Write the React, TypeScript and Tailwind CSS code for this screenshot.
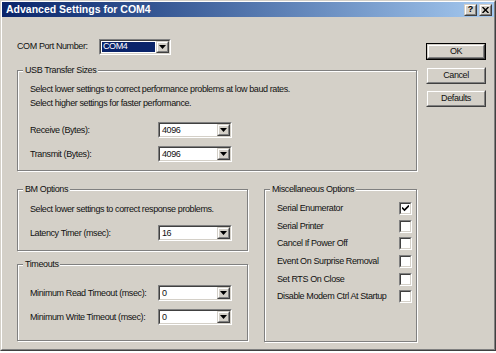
import React from "react";

const sunkenOuter = "border border-t-[#808080] border-l-[#808080] border-r-white border-b-white";
const sunkenInner = "border border-t-[#404040] border-l-[#404040] border-r-[#d4d0c8] border-b-[#d4d0c8]";
const raisedOuter = "border border-t-[#d4d0c8] border-l-[#d4d0c8] border-r-[#404040] border-b-[#404040]";
const raisedInner = "border border-t-white border-l-white border-r-[#808080] border-b-[#808080]";

function Arrow() {
  return (
    <svg width="7" height="4" viewBox="0 0 7 4">
      <path d="M0 0H7L3.5 4Z" fill="#000" />
    </svg>
  );
}

function Combo({ value, selected = false, className = "" }: { value: string; selected?: boolean; className?: string }) {
  return (
    <div className={`flex h-[16px] ${sunkenOuter} ${className}`}>
      <div className={`flex flex-1 bg-white ${sunkenInner}`}>
        <div className="flex flex-1 items-center">
          {selected ? (
            <div className="ml-[1px] mr-[1px] flex h-[10px] flex-1 items-center bg-[#0a246a] pl-[1px] text-white">{value}</div>
          ) : (
            <div className="pl-[2px]">{value}</div>
          )}
        </div>
        <div className={`flex w-[13px] items-center justify-center bg-[#d4d0c8] ${raisedOuter}`}>
          <div className={`flex h-full w-full items-center justify-center ${raisedInner}`}>
            <Arrow />
          </div>
        </div>
      </div>
    </div>
  );
}

function Check({ checked = false }: { checked?: boolean }) {
  return (
    <div className={`h-[13px] w-[13px] ${sunkenOuter}`}>
      <div className={`flex h-full w-full items-center justify-center bg-white ${sunkenInner}`}>
        {checked && (
          <svg width="7" height="7" viewBox="0 0 7 7">
            <path d="M0 2.5L2.5 5L7 0.5" fill="none" stroke="#000" strokeWidth="1.6" />
          </svg>
        )}
      </div>
    </div>
  );
}

function Group({ title, className = "", children }: { title: string; className?: string; children?: React.ReactNode }) {
  return (
    <div className={`relative border border-[#808080] shadow-[1px_1px_0_#fff,inset_1px_1px_0_#fff] ${className}`}>
      <span className="absolute left-[5px] top-[-7px] bg-[#d4d0c8] px-[2px] leading-[12px]">{title}</span>
      {children}
    </div>
  );
}

function Button({ label, isDefault = false }: { label: string; isDefault?: boolean }) {
  if (isDefault) {
    return (
      <div className="h-[17px] w-[60px] border border-black">
        <div className={`flex h-full w-full items-center justify-center ${raisedOuter}`}>
          <div className={`flex h-full w-full items-center justify-center ${raisedInner}`}>{label}</div>
        </div>
      </div>
    );
  }
  return (
    <div className={`h-[17px] w-[60px] ${raisedOuter}`}>
      <div className={`flex h-full w-full items-center justify-center ${raisedInner}`}>{label}</div>
    </div>
  );
}

function TitleBtn({ children }: { children: React.ReactNode }) {
  return (
    <div className={`h-[12px] w-[13px] bg-[#d4d0c8] ${raisedOuter}`}>
      <div className={`flex h-full w-full items-center justify-center ${raisedInner}`}>{children}</div>
    </div>
  );
}

function Row({ label, value, labelW = "w-[128px]" }: { label: string; value: string; labelW?: string }) {
  return (
    <div className="flex items-center">
      <div className={labelW}>{label}</div>
      <Combo value={value} className="w-[74px]" />
    </div>
  );
}

export default function App() {
  const misc: [string, boolean][] = [
    ["Serial Enumerator", true],
    ["Serial Printer", false],
    ["Cancel If Power Off", false],
    ["Event On Surprise Removal", false],
    ["Set RTS On Close", false],
    ["Disable Modem Ctrl At Startup", false],
  ];
  return (
    <div className="h-[353px] w-[496px] bg-white font-['Liberation_Sans',sans-serif] text-[9px] leading-[13px] tracking-[-0.4px] text-[#111]">
      <div className="h-[351px] w-[496px] border border-t-[#d4d0c8] border-l-[#d4d0c8] border-r-[#404040] border-b-[#404040] bg-[#d4d0c8]">
        <div className="flex h-full w-full flex-col border border-t-white border-l-white border-r-[#808080] border-b-[#808080]">
          <div className="flex h-[15px] items-center bg-gradient-to-r from-[#0a246a] to-[#a6caf0] pl-[4px] pr-[2px]">
            <span className="flex-1 text-[10.5px] font-bold leading-[15px] tracking-normal text-white">
              Advanced Settings for COM4
            </span>
            <div className="flex gap-[2px]">
              <TitleBtn>
                <span className="text-[9px] font-bold leading-[9px] tracking-normal text-black">?</span>
              </TitleBtn>
              <TitleBtn>
                <svg width="7" height="6" viewBox="0 0 7 6">
                  <path d="M0.5 0L6.5 6M6.5 0L0.5 6" stroke="#000" strokeWidth="1.4" />
                </svg>
              </TitleBtn>
            </div>
          </div>
          <div className="flex pl-[15px]">
            <div className="flex w-[400px] flex-col">
              <div className="mt-[22px] flex h-[15px] items-center">
                <div className="w-[82px]">COM Port Number:</div>
                <Combo value="COM4" selected className="h-[15px] w-[72px]" />
              </div>
              <Group title="USB Transfer Sizes" className="mt-[16px] h-[101px] pl-[12px] pt-[11px]">
                <div className="leading-[14px]">
                  <div>Select lower settings to correct performance problems at low baud rates.</div>
                  <div>Select higher settings for faster performance.</div>
                </div>
                <div className="mt-[12px] flex flex-col gap-[8px]">
                  <Row label="Receive (Bytes):" value="4096" />
                  <Row label="Transmit (Bytes):" value="4096" />
                </div>
              </Group>
              <div className="mt-[18px] flex gap-[16px]">
                <div className="flex w-[231px] flex-col">
                  <Group title="BM Options" className="h-[62px] pl-[12px] pt-[12px]">
                    <div className="leading-[14px]">Select lower settings to correct response problems.</div>
                    <div className="mt-[9px]">
                      <Row label="Latency Timer (msec):" value="16" />
                    </div>
                  </Group>
                  <Group title="Timeouts" className="mt-[13px] h-[77px] pl-[12px] pt-[20px]">
                    <div className="flex flex-col gap-[8px]">
                      <Row label="Minimum Read Timeout (msec):" value="0" />
                      <Row label="Minimum Write Timeout (msec):" value="0" />
                    </div>
                  </Group>
                </div>
                <Group title="Miscellaneous Options" className="h-[153px] w-[153px] pl-[12px] pt-[10px]">
                  {misc.map(([l, c]) => (
                    <div key={l} className="flex h-[17.6px] items-center">
                      <div className="w-[122px]">{l}</div>
                      <Check checked={c} />
                    </div>
                  ))}
                </Group>
              </div>
            </div>
            <div className="ml-[9px] mt-[26px] flex flex-col gap-[6.5px]">
              <Button label="OK" isDefault />
              <Button label="Cancel" />
              <Button label="Defaults" />
            </div>
          </div>
        </div>
      </div>
    </div>
  );
}
